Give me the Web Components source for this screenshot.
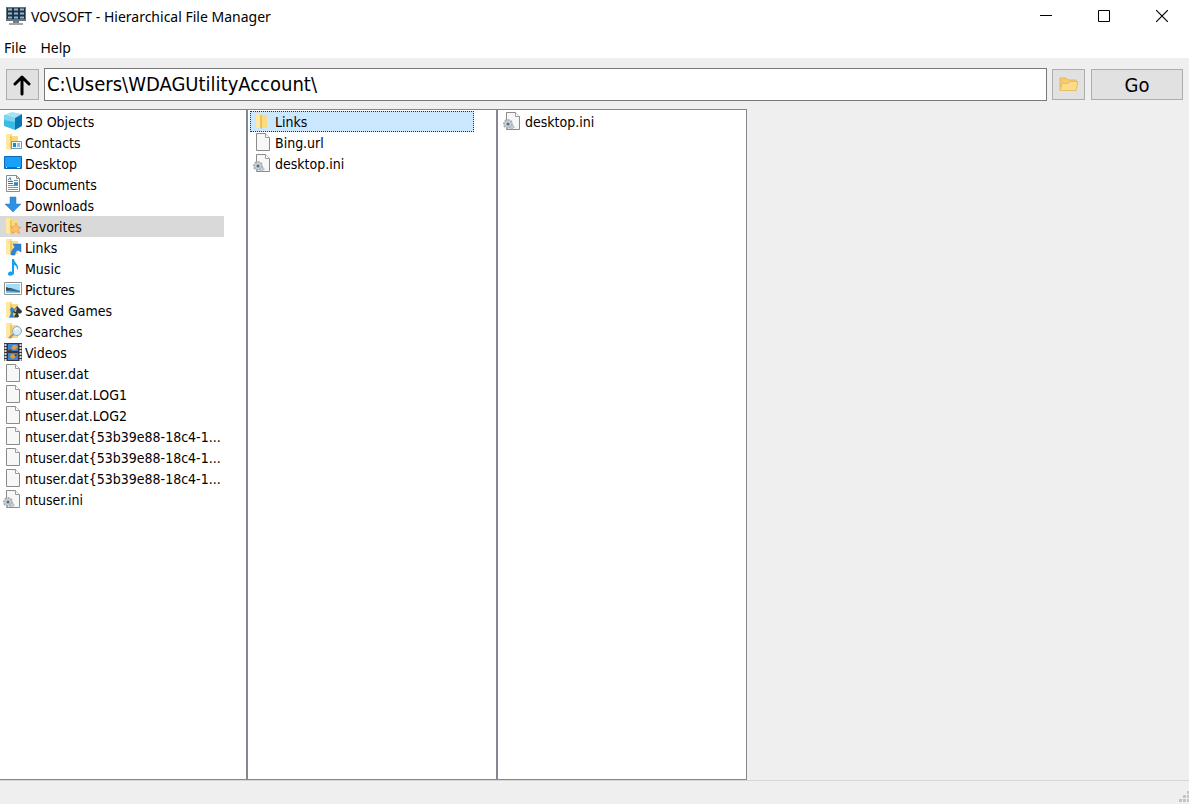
<!DOCTYPE html>
<html lang="en">
<head>
<meta charset="utf-8">
<meta name="viewport" content="width=device-width, initial-scale=1">
<title>VOVSOFT - Hierarchical File Manager</title>
<style>
  body { margin: 0; background: #efefef; color: #000; font-family: "DejaVu Sans Condensed", "DejaVu Sans", sans-serif; font-size: 14px; }
</style>
</head>
<body>
<file-manager>
  <title-bar slot="title">VOVSOFT - Hierarchical File Manager</title-bar>
  <menu-bar slot="menu"></menu-bar>
  <path-bar slot="path" value="C:\Users\WDAGUtilityAccount\"></path-bar>
  <file-pane slot="panes" label="User folder">
    <file-item icon="cube">3D Objects</file-item>
    <file-item icon="contacts">Contacts</file-item>
    <file-item icon="desktop">Desktop</file-item>
    <file-item icon="documents">Documents</file-item>
    <file-item icon="downloads">Downloads</file-item>
    <file-item icon="favorites" class="parent">Favorites</file-item>
    <file-item icon="links">Links</file-item>
    <file-item icon="music">Music</file-item>
    <file-item icon="pictures">Pictures</file-item>
    <file-item icon="games">Saved Games</file-item>
    <file-item icon="searches">Searches</file-item>
    <file-item icon="videos">Videos</file-item>
    <file-item icon="file">ntuser.dat</file-item>
    <file-item icon="file">ntuser.dat.LOG1</file-item>
    <file-item icon="file">ntuser.dat.LOG2</file-item>
    <file-item icon="file">ntuser.dat{53b39e88-18c4-1...</file-item>
    <file-item icon="file">ntuser.dat{53b39e88-18c4-1...</file-item>
    <file-item icon="file">ntuser.dat{53b39e88-18c4-1...</file-item>
    <file-item icon="ini">ntuser.ini</file-item>
  </file-pane>
  <file-pane slot="panes" label="Favorites">
    <file-item icon="folder" class="current">Links</file-item>
    <file-item icon="file">Bing.url</file-item>
    <file-item icon="ini">desktop.ini</file-item>
  </file-pane>
  <file-pane slot="panes" label="Links">
    <file-item icon="ini">desktop.ini</file-item>
  </file-pane>
  <status-bar slot="status"></status-bar>
</file-manager>

<script>
const FOLDER = `
  <path d="M2 1h6v2h6v13H2z" fill="#f9db82"/>
  <path d="M2 1h4v16l-4-1z" fill="#ffe8a3"/>
  <path d="M6 3l2 1v13l-2-1z" fill="#edc862"/>`;

const PAGE = `
  <path d="M2.5 .5h9l4 4v13h-13z" fill="#f7f7f7" stroke="#8b8b8b"/>
  <path d="M11.5 .5v4h4" fill="#fff" stroke="#9b9b9b"/>`;

// 18x18 shell icons
const ICONS = {
  cube: `
    <path d="M0 3l8-3 10 2-7 4z" fill="#a5e2f4"/>
    <path d="M0 3l11 3v12L0 14z" fill="#3bbce4"/>
    <path d="M11 6l7-4v12l-7 4z" fill="#0878b4"/>
    <path d="M0 3l11 3v4L0 8z" fill="#7bd6ee"/>`,
  contacts: `${FOLDER}
    <path d="M7.5 8.500h10v7h-10z" fill="#eef8ff" stroke="#6f9db8"/>
    <path d="M9 10h3v4H9z" fill="#2686c4"/>
    <path d="M13 11h3M13 13h3" stroke="#4b86a8"/>`,
  desktop: `
    <path d="M.5 2.500h17v12H.5z" fill="#18a0fb" stroke="#0b69b4"/>
    <path d="M1 13.500h16" stroke="#0870c4"/>
    <path d="M2 13.500h1M13 13.500h3" stroke="#d6efff"/>`,
  documents: `
    <path d="M2.500 .5h10l3 3v13h-13z" fill="#fff" stroke="#8b8b8b"/>
    <path d="M12.500 .5v3h3" fill="none" stroke="#8b8b8b"/>
    <path d="M4 5.500l2-3 1 3M4 6.500h5M4 8.500h5" fill="none" stroke="#1585c7"/>
    <path d="M10 5.500h4M10 7.500h4M4 10.500h10M4 12.500h10M4 14.500h10" stroke="#7396ab"/>
    <path d="M10 8h4v2h-4z" fill="#278acb"/>`,
  downloads: `<path d="M6 1h6v7h5l-8 8-8-8h5z" fill="#2f8fe4" stroke="#257dca" stroke-width=".5"/>`,
  favorites: `${FOLDER}
    <path d="M12 6l1.500 4 3.500.3-2.800 2.200 1.300 4-3.500-2-4 2L9.400 12.500 6.500 10l4-.2z" fill="#ffc56c" stroke="#ec9848" stroke-width=".8"/>`,
  links: `${FOLDER}
    <path d="M9 6h8v8l-3-2c-2 1-3 2-3 5H7c0-4 2-6 4-8z" fill="#2c82d3" stroke="#226fbd" stroke-width=".5"/>`,
  music: `
    <path d="M8 0h2c0 4 5 5 4 10-1 1-1 1-1 0 0-3-2-4-3-4v8c0 3-6 4-6 1 0-2 2-3 4-2z" fill="#12a0ef"/>`,
  pictures: `
    <path d="M.5 2.500h17v12H.5z" fill="#fff" stroke="#929292"/>
    <path d="M2 4h14v9H2z" fill="#a6dcf7"/>
    <path d="M2 8l5 0 9 3v2H2z" fill="#356f93"/>
    <path d="M2 7l6 2-6 1z" fill="#43474b"/>
    <path d="M2 11l14 1v1H2z" fill="#8bc6dc"/>`,
  games: `${FOLDER}
    <path d="M8 6l2 2-1 4 1 5H5l2-5-1-4z" fill="#2c83bd"/>
    <path d="M13 5l5 5c0 3-3 3-4 2l1 4h-5l2-4c-2 1-4-1-2-3z" fill="#37383e"/>
    <path d="M13 6l-3 4 2 1z" fill="#b5bcc4"/>
    <path d="M5 16.500h9" stroke="#9aa4ad"/>`,
  searches: `${FOLDER}
    <path d="M10 12l-5 4" stroke="#9c9284" stroke-width="2"/>
    <circle cx="13" cy="9" r="4.500" fill="#d4edf8" stroke="#91a9b5"/>
    <path d="M11 8q1-2 3-2" fill="none" stroke="#fff" stroke-width="1.500"/>`,
  videos: `
    <path d="M0 0h18v18H0z" fill="#34383e"/>
    <path d="M1.500 1v17M16.500 1v17" stroke="#d8dadd" stroke-width="2" stroke-dasharray="2 1"/>
    <path d="M4 1h10v7H4zM4 10h10v7H4z" fill="#3a86d6"/>
    <path d="M9 2h3l2 2-3 3-4-1zM7 11h3l2 3-3 2-3-2z" fill="#df9a4c"/>
    <path d="M4 7l3-1 1 1-1 1H4zM10 12l3-1-1 3z" fill="#71431c"/>`,
  file: PAGE,
  ini: `${PAGE}
    <circle cx="4" cy="12" r="4" fill="#c9d2d8" stroke="#a5aeb4" stroke-width="2" stroke-dasharray="2 1"/>
    <circle cx="4" cy="12" r="1.500" fill="#596b78"/>
    <circle cx="8" cy="15" r="2" fill="#c5cdd2" stroke="#9fa8ad" stroke-dasharray="1 1"/>`,
  folder: `
    <path d="M2 2h6v1h5v13H2z" fill="#f9dc80"/>
    <path d="M2 2h4v14H2z" fill="#ffe9a8"/>
    <path d="M6 3l2 1v13l-2-1z" fill="#e9c25a"/>`
};

class FileManager extends HTMLElement {
  constructor() {
    super();
    this.attachShadow({ mode: "open" }).innerHTML = `
      <style>
        :host { display: flex; flex-direction: column; min-height: 100vh; }
        main { display: flex; flex: 1; }
      </style>
      <slot name="title"></slot>
      <slot name="menu"></slot>
      <slot name="path"></slot>
      <main><slot name="panes"></slot></main>
      <slot name="status"></slot>
    `;
  }
}
customElements.define("file-manager", FileManager);

class TitleBar extends HTMLElement {
  constructor() {
    super();
    this.attachShadow({ mode: "open" }).innerHTML = `
      <style>
        :host { display: flex; align-items: center; box-sizing: border-box; height: 34px; padding-bottom: 2px; background: #fff; font: 14px "Noto Sans", "Open Sans", sans-serif; }
        .logo { margin: 0 5px 0 6px; }
        .caption { flex: 1; white-space: nowrap; }
        .controls { display: flex; gap: 4px; }
        button { display: flex; align-items: center; justify-content: center; width: 54px; height: 32px; padding: 0; border: 0; background: none; }
        button:hover { background: #e5e5e5; }
      </style>
      <svg class="logo" width="20" height="20" viewBox="0 0 20 20" aria-hidden="true">
        <path d="M0 1h20v14H0z" fill="#6b7278"/>
        <path d="M1 2h18v11H1z" fill="#26303b"/>
        <path d="M2 3.500h4M8 3.500h4M14 3.500h4M2 7.500h4M8 7.500h4M14 7.500h4M2 11.500h4M8 11.500h4M14 11.500h4" stroke="#83bce8" stroke-width="2"/>
        <path d="M3 3.500h1M9 3.500h1M15 3.500h1M3 7.500h1M9 7.500h1M15 7.500h1M3 11.500h1M9 11.500h1M15 11.500h1" stroke="#d7a66f"/>
        <path d="M7 15h6v2H7z" fill="#778087"/>
        <path d="M3 17h14v2H3z" fill="#a0a5a8"/>
      </svg>
      <span class="caption"><slot></slot></span>
      <div class="controls">
        <button aria-label="Minimize"><svg width="12" height="12"><path d="M0 5.500h12" stroke="#000"/></svg></button>
        <button aria-label="Maximize"><svg width="12" height="12"><path d="M.5 .5h11v11H.5z" fill="none" stroke="#000"/></svg></button>
        <button aria-label="Close"><svg width="12" height="12"><path d="M0 0l12 12M12 0L0 12" stroke="#000" stroke-width="1.200"/></svg></button>
      </div>
    `;
  }
}
customElements.define("title-bar", TitleBar);

class MenuBar extends HTMLElement {
  constructor() {
    super();
    this.attachShadow({ mode: "open" }).innerHTML = `
      <style>
        :host { display: block; height: 24px; background: #fff; }
        nav { display: flex; gap: 14px; padding-left: 4px; }
        button { padding: 0; border: 0; background: none; color: #000; font: 14px/28px "Noto Sans", "Open Sans", sans-serif; }
      </style>
      <nav>
        <button>File</button>
        <button>Help</button>
      </nav>
    `;
  }
}
customElements.define("menu-bar", MenuBar);

class PathBar extends HTMLElement {
  constructor() {
    super();
    this.attachShadow({ mode: "open" }).innerHTML = `
      <style>
        :host { display: flex; align-items: center; gap: 5px; padding: 10px 6px 8px; }
        button { display: flex; align-items: center; justify-content: center; box-sizing: border-box; width: 33px; height: 31px; padding: 0; border: 1px solid #adadad; background: #e1e1e1; color: #000; font: 20px "DejaVu Sans Condensed", sans-serif; }
        button:hover { border-color: #0078d7; background: #e5f1fb; }
        input { flex: 1; min-width: 0; box-sizing: border-box; height: 33px; padding: 0 2px 2px; border: 1px solid #7a7a7a; border-radius: 0; outline: none; background: #fff; color: #000; font: 20px "DejaVu Sans Condensed", sans-serif; }
        .go { width: 92px; margin-left: 1px; }
      </style>
      <button aria-label="Up one level">
        <svg width="19" height="22" viewBox="0 0 19 22"><path d="M9 20V3M2 10l7-7 7 7" fill="none" stroke="#000" stroke-width="3" stroke-linecap="round" stroke-linejoin="round"/></svg>
      </button>
      <input type="text" aria-label="Path" spellcheck="false">
      <button aria-label="Browse">
        <svg width="20" height="18" viewBox="0 0 20 18">
          <path d="M1 14V2h6l2 2h8v4" fill="#f3cd6d" stroke="#e3b95d"/>
          <path d="M1 14.500L3 7.500h6l2-2h8L17 14.500z" fill="#fddc87" stroke="#e5bd64"/>
        </svg>
      </button>
      <button class="go">Go</button>
    `;
  }
  connectedCallback() {
    this.shadowRoot.querySelector("input").value = this.getAttribute("value") || "";
  }
}
customElements.define("path-bar", PathBar);

class FilePane extends HTMLElement {
  constructor() {
    super();
    this.attachShadow({ mode: "open" }).innerHTML = `
      <style>
        :host { display: block; box-sizing: border-box; width: 250px; padding: 1px 2px; border: 1px solid #828790; background: #fff; }
        /* the first pane sits flush against the window edge */
        :host(:first-of-type) { width: 247px; padding-left: 0; border-left: 0; }
      </style>
      <slot></slot>
    `;
  }
  connectedCallback() {
    this.setAttribute("role", "listbox");
    this.setAttribute("aria-label", this.getAttribute("label"));
  }
}
customElements.define("file-pane", FilePane);

class FileItem extends HTMLElement {
  constructor() {
    super();
    this.attachShadow({ mode: "open" }).innerHTML = `
      <style>
        :host { display: flex; align-items: flex-start; gap: 3px; box-sizing: border-box; width: 224px; height: 21px; padding-left: 4px; white-space: nowrap; cursor: default; }
        :host(.parent) { background: #d9d9d9; }
        :host(.current) { background: #cce8ff; outline: 1px dotted #003c74; outline-offset: -1px; }
        svg { flex: none; margin-top: 1px; overflow: visible; }
        span { line-height: 22px; }
      </style>
      <svg width="18" height="18" viewBox="0 0 18 18" aria-hidden="true"></svg>
      <span><slot></slot></span>
    `;
  }
  connectedCallback() {
    this.setAttribute("role", "option");
    this.setAttribute("aria-selected", this.matches(".parent, .current"));
    this.shadowRoot.querySelector("svg").innerHTML = ICONS[this.getAttribute("icon")];
  }
}
customElements.define("file-item", FileItem);

class StatusBar extends HTMLElement {
  constructor() {
    super();
    this.attachShadow({ mode: "open" }).innerHTML = `
      <style>
        :host { display: flex; align-items: flex-end; justify-content: flex-end; box-sizing: border-box; height: 24px; border-top: 1px solid #d7d7d7; }
        svg { margin-bottom: 2px; }
      </style>
      <svg width="11" height="11" viewBox="0 0 11 11" aria-hidden="true">
        <path d="M9 0h2v3H9zM5 4h3v3H5zM9 4h2v3H9zM1 8h3v3H1zM5 8h3v3H5zM9 8h2v3H9z" fill="#bfc7c5"/>
      </svg>
    `;
  }
}
customElements.define("status-bar", StatusBar);
</script>
</body>
</html>
